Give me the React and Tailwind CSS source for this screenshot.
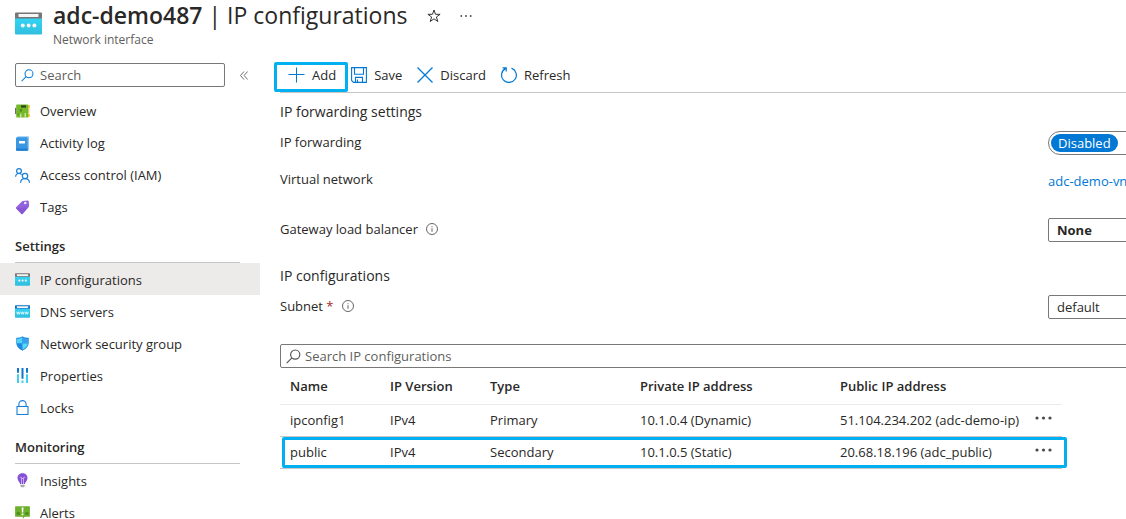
import React from "react";

function NicIcon({ className, dns }) {
  return (
    <svg viewBox="0 0 27 23" className={className} aria-hidden="true">
      <defs>
        <linearGradient id="nic-body" x1="0" y1="0" x2="0" y2="1">
          <stop offset="0" stopColor="#32d4f5" />
          <stop offset="1" stopColor="#32bedd" />
        </linearGradient>
      </defs>
      <path d="M0 6h27v15.600a1 1 0 0 1-1 1H1a1 1 0 0 1-1-1z" fill="url(#nic-body)" />
      <path d="M1 .4h25a1 1 0 0 1 1 1V6.400H0v-5a1 1 0 0 1 1-1z" fill={dns ? "#0f72c9" : "#767676"} />
      <rect x="3.500" y="2" width="20" height="3" rx=".4" fill="#f6f6f6" />
      {dns ? (
        <path
          d="M3 12l1.500 4.500L6 12l1.500 4.500L9 12m1.500 0l1.500 4.500 1.500-4.500 1.500 4.500 1.500-4.500m1.500 0l1.500 4.500 1.500-4.500 1.500 4.500L24 12"
          fill="none"
          stroke="#f2fdff"
          strokeWidth="1.400"
        />
      ) : (
        <g fill="#f6f3f4">
          <circle cx="7.800" cy="13.500" r="2" />
          <circle cx="13.600" cy="13.500" r="2" />
          <circle cx="19.400" cy="13.500" r="2" />
        </g>
      )}
    </svg>
  );
}

function SearchIcon({ className }) {
  return (
    <svg viewBox="0 0 14 14" className={className} fill="none" stroke="currentColor" strokeWidth="1.100" aria-hidden="true">
      <circle cx="8.600" cy="5.200" r="4.300" />
      <path d="M5.500 8.300L.6 13.200" />
    </svg>
  );
}

function InfoIcon() {
  return (
    <svg viewBox="0 0 12 12" className="size-3 text-[#555]" fill="none" stroke="currentColor" aria-hidden="true">
      <circle cx="6" cy="6" r="5.500" strokeWidth=".9" />
      <path d="M6 5.200v3.600M6 3.200v1" strokeWidth=".9" />
    </svg>
  );
}

const icons = {
  overview: (
    <svg viewBox="0 0 15 15" className="size-[15px]" aria-hidden="true">
      <path d="M0 4l1.500-.4v7L0 9.800z" fill="#6b6b6b" />
      <path d="M13 1h1a.8.800 0 0 1 .8.800v2.600H13zM13 10h1.800v2.400a.8.800 0 0 1-.8.800h-1z" fill="#f5c32c" />
      <path d="M13 4.800h1.500v4.800H13z" fill="#e8d27a" />
      <rect x="1.200" y=".6" width="12" height="13" rx=".8" fill="#76b82a" />
      <rect x="6" y="1.300" width="5" height="2.300" fill="#2d4a16" />
      <rect x="4.800" y="5.200" width="2.200" height="2.400" fill="#4f8520" />
      <path d="M5.200 13.600V9.800h1.200v3.800zM9.600 13.600V9h1.200v4.600z" fill="#d8efb8" />
      <path d="M2.500 9.500h1.600v1.600H2.500z" fill="#5e9624" />
    </svg>
  ),
  activity: (
    <svg viewBox="0 0 15 15" className="size-[15px]" aria-hidden="true">
      <path d="M2.500.2h10.700a.8.800 0 0 1 .8.800v12.600a1 1 0 0 1-1 1H2.500z" fill="#8fcaf3" />
      <path d="M2 1.200h9.900a.8.800 0 0 1 .8.800v12.800H2.500A1.400 1.400 0 0 1 1 13.400V2.200a1 1 0 0 1 1-1z" fill="#3a97e2" />
      <path d="M1 12.600h11.700v2.200H2.200A1.200 1.200 0 0 1 1 13.600z" fill="#1f7fd2" />
      <rect x="4" y="5" width="6" height="2.400" rx=".3" fill="#fff" />
    </svg>
  ),
  access: (
    <svg viewBox="0 0 15 15" className="size-[15px]" fill="none" stroke="#1a7fd6" strokeWidth="1.200" aria-hidden="true">
      <circle cx="4" cy="3" r="2.400" />
      <path d="M.6 8.800c.1-2 1.600-3.300 3.400-3.300 1.100 0 2 .4 2.600 1.100" />
      <circle cx="10" cy="8" r="2.700" />
      <path d="M5.600 14.700c.1-2.400 1.900-4 4.400-4s4.300 1.600 4.500 4" />
    </svg>
  ),
  tags: (
    <svg viewBox="0 0 15 15" className="size-[15px]" aria-hidden="true">
      <path d="M8 .9l4.800-.5a.9.900 0 0 1 .9.800l.4 4.800a1 1 0 0 1-.3.800l-6.100 7.100a.9.900 0 0 1-1.300 0L1.100 8.500a.8.800 0 0 1 0-1.200L7.200 1.300A1.300 1.300 0 0 1 8 .9z" fill="#9262dc" />
      <path d="M1.100 8.300l5.200 5.500a.9.900 0 0 0 1.300 0l6-6.800z" fill="#7f4bcb" opacity=".5" />
      <circle cx="10.300" cy="3" r="1.300" fill="#f1e8fb" />
    </svg>
  ),
  ipconfig: <NicIcon className="h-[13px] w-[15px]" />,
  dns: <NicIcon className="h-[13px] w-[15px]" dns />,
  nsg: (
    <svg viewBox="0 0 15 15" className="size-[15px]" aria-hidden="true">
      <path d="M7.500.2c2 1.600 3.900 1.500 6.200 1.600v5c0 4.300-3.500 6.400-6.200 8-2.700-1.600-6.200-3.700-6.200-8v-5C3.600 1.700 5.500 1.800 7.500.2z" fill="#1a86d9" />
      <path d="M7.500 1.200v6.400H2V2.700c2-.1 3.700-.1 5.500-1.500z" fill="#50d5fa" />
      <path d="M7.500 1.200v6.400H13V2.700c-2-.1-3.700-.1-5.500-1.500z" fill="#3aa0ee" />
      <path d="M2 7.500h5.500v6.300C5 12.300 2.300 10.500 2 7.500z" fill="#1f8ae0" />
      <path d="M13 7.500H7.500v6.300c2.500-1.500 5.200-3.300 5.500-6.300z" fill="#58d8fb" />
    </svg>
  ),
  properties: (
    <svg viewBox="0 0 15 15" className="size-[15px]" aria-hidden="true">
      <path d="M2 0h2v4.800H2zM6.500 0h2v10.800h-2zM11 0h2v4.800h-2z" fill="#0f76cc" />
      <path d="M2 6.200h2V15H2zM6.500 12.400h2V15h-2zM11 6.200h2V15h-2z" fill="#3fd0ee" />
    </svg>
  ),
  locks: (
    <svg viewBox="0 0 15 15" className="size-[15px]" fill="none" stroke="#1a7fd6" strokeWidth="1.100" aria-hidden="true">
      <rect x="2" y="6.500" width="11" height="8" />
      <path d="M3.900 6.500V4.200a3.600 3.600 0 0 1 7.200 0v2.300" />
    </svg>
  ),
  insights: (
    <svg viewBox="0 0 15 15" className="size-[15px]" aria-hidden="true">
      <path d="M7.500.3c2.800 0 5 2 5 4.700 0 2.900-2.200 3.600-2.600 6.100H5.100C4.700 8.600 2.500 7.900 2.500 5c0-2.700 2.200-4.700 5-4.700z" fill="#8650d6" />
      <path d="M6.500 11V5.500M8.500 11V5.500M4.900 4.700a.9.900 0 1 1 1.600.8h2a.9.900 0 1 1 1.600-.8" fill="none" stroke="#d9c4f6" strokeWidth=".8" />
      <path d="M5.300 11.700h4.400v1.400l-1 1.200H6.300l-1-1.200z" fill="#a9a9a9" />
    </svg>
  ),
  alerts: (
    <svg viewBox="0 0 15 15" className="size-[15px]" aria-hidden="true">
      <path d="M.6 1.200h13.800a.5.500 0 0 1 .5.500v9.600a.5.500 0 0 1-.5.500H9.600l-1.700 1.900-.1-1.900H.6a.5.500 0 0 1-.5-.5V1.700a.5.500 0 0 1 .5-.5z" fill="#6cb02c" />
      <path d="M1.700 7.200h3.200v2.600H1.700zM10.200 7.200h3.200v2.600h-3.200z" fill="#4b8a1b" />
      <path d="M6.600 2.400h1.900l-.3 5H6.900zM6.700 8.500h1.700v1.700H6.700z" fill="#fff" />
    </svg>
  ),
};

function NavItem({ icon, label, selected }) {
  return (
    <li>
      <a
        href="#"
        aria-current={selected ? "page" : undefined}
        className={`flex h-8 items-center gap-[10px] pl-[15px] ${selected ? "bg-[#edebe9]" : ""}`}
      >
        {icons[icon]}
        <span>{label}</span>
      </a>
    </li>
  );
}

function NavGroup({ title, children }) {
  return (
    <section className="pb-px">
      <h2 className="mt-[7px] mr-5 ml-[15px] flex h-[33px] items-center border-b border-[#c8c6c4] font-semibold">
        {title}
      </h2>
      <ul className="[&_span]:pt-0.5">{children}</ul>
    </section>
  );
}

function ToolButton({ icon, children, highlighted }) {
  return (
    <button type="button" className="relative flex h-8 items-center gap-[7px]">
      {icon}
      <span>{children}</span>
      {highlighted && (
        <span className="absolute top-[3px] -right-3 -bottom-px -left-3.5 rounded-[2px] border-3 border-[#00b0f0]" />
      )}
    </button>
  );
}

function SettingRow({ id, label, required, info, className, children }) {
  return (
    <div className={`flex h-6 shrink-0 ${className}`}>
      <div className="flex h-[22px] w-[768px] shrink-0 items-center">
        <label htmlFor={id}>
          {label}
          {required && <span className="text-[#a4262c]"> *</span>}
        </label>
        {info && (
          <span className="ml-2">
            <InfoIcon />
          </span>
        )}
      </div>
      {children}
    </div>
  );
}

function MoreButton() {
  return (
    <button type="button" aria-label="More actions" className="flex h-5 w-5 items-center pb-1">
      <svg viewBox="0 0 17 4" className="h-1 w-[17px]" fill="#4a4a4a" aria-hidden="true">
        <circle cx="2" cy="2" r="1.600" />
        <circle cx="8.500" cy="2" r="1.600" />
        <circle cx="15" cy="2" r="1.600" />
      </svg>
    </button>
  );
}

const rows = [
  { name: "ipconfig1", version: "IPv4", type: "Primary", priv: "10.1.0.4 (Dynamic)", pub: "51.104.234.202 (adc-demo-ip)" },
  { name: "public", version: "IPv4", type: "Secondary", priv: "10.1.0.5 (Static)", pub: "20.68.18.196 (adc_public)", highlighted: true },
];

export default function App() {
  return (
    <div className="flex h-screen flex-col overflow-hidden bg-white font-['Open_Sans','Noto_Sans',sans-serif] text-[13px] leading-5 text-[#292827]">
      <header className="flex h-[59px] shrink-0 items-start pl-[15px]">
        <NicIcon className="mt-3 h-[23px] w-[27px]" />
        <div className="ml-[11px]">
          <h1 className="h-8 text-[23px] leading-[30px] whitespace-nowrap">
            <span className="font-semibold">adc-demo487</span> | IP configurations
          </h1>
          <p className="text-[12px] leading-4 text-[#605e5c]">Network interface</p>
        </div>
        <button type="button" aria-label="Add to favorites" className="mt-[9px] ml-[19px]">
          <svg viewBox="0 0 14 14" className="size-3.5" fill="none" stroke="#333" strokeWidth="1" aria-hidden="true">
            <path d="M7 1l1.500 4.300h4.600L9.400 8l1.400 4.500L7 9.800l-3.800 2.700L4.600 8 .9 5.300h4.600z" />
          </svg>
        </button>
        <button type="button" aria-label="More" className="mt-[14px] ml-[19px]">
          <svg viewBox="0 0 12 4" className="h-1 w-3" fill="#444" aria-hidden="true">
            <circle cx="1.300" cy="2" r=".9" />
            <circle cx="6" cy="2" r=".9" />
            <circle cx="10.700" cy="2" r=".9" />
          </svg>
        </button>
      </header>

      <div className="flex min-h-0 flex-1">
        <nav className="w-[260px] shrink-0">
          <div className="mt-1 mb-2 ml-[15px] flex items-center">
            <label className="flex h-6 w-[210px] items-center gap-[6px] rounded-[2px] border border-[#7a7876] pl-[5px]">
              <SearchIcon className="size-[13px] shrink-0 text-[#0078d4]" />
              <input
                type="search"
                aria-label="Search menu"
                placeholder="Search"
                className="w-full min-w-0 bg-transparent outline-none placeholder:text-[#605e5c]"
              />
            </label>
            <button type="button" aria-label="Collapse menu" className="ml-[15px]">
              <svg viewBox="0 0 8 9" className="h-[9px] w-2" fill="none" stroke="#605e5c" strokeWidth=".9" aria-hidden="true">
                <path d="M4 .5l-3.500 4L4 8.500M7.600.5l-3.500 4 3.500 4" />
              </svg>
            </button>
          </div>
          <ul>
            <NavItem icon="overview" label="Overview" />
            <NavItem icon="activity" label="Activity log" />
            <NavItem icon="access" label="Access control (IAM)" />
            <NavItem icon="tags" label="Tags" />
          </ul>
          <NavGroup title="Settings">
            <NavItem icon="ipconfig" label="IP configurations" selected />
            <NavItem icon="dns" label="DNS servers" />
            <NavItem icon="nsg" label="Network security group" />
            <NavItem icon="properties" label="Properties" />
            <NavItem icon="locks" label="Locks" />
          </NavGroup>
          <NavGroup title="Monitoring">
            <NavItem icon="insights" label="Insights" />
            <NavItem icon="alerts" label="Alerts" />
          </NavGroup>
        </nav>

        <main className="flex min-w-0 flex-1 flex-col overflow-hidden">
          <div className="ml-5 flex h-[34px] shrink-0 items-start gap-[15px] border-b border-[#c8c6c4] pl-2">
            <ToolButton
              highlighted
              icon={
                <svg viewBox="0 0 17 16" className="h-4 w-[17px]" fill="none" stroke="#0078d4" strokeWidth="1" aria-hidden="true">
                  <path d="M8.500.5v15M.5 7.500h16" />
                </svg>
              }
            >
              Add
            </ToolButton>
            <ToolButton
              icon={
                <svg viewBox="0 0 16 16" className="size-4" fill="none" stroke="#0078d4" strokeWidth="1.100" aria-hidden="true">
                  <path d="M.6.6h14.800v14.800H2.500L.6 13.500zM3.500.6v6.600h9V.6M4.500 15.400v-5h7v5M6.500 12.400v3" />
                </svg>
              }
            >
              Save
            </ToolButton>
            <ToolButton
              icon={
                <svg viewBox="0 0 16 16" className="size-4" fill="none" stroke="#0078d4" strokeWidth="1.300" aria-hidden="true">
                  <path d="M.5.5l15 15M15.500.5l-15 15" />
                </svg>
              }
            >
              Discard
            </ToolButton>
            <ToolButton
              icon={
                <svg viewBox="0 0 16 16" className="size-4" fill="none" stroke="#0078d4" strokeWidth="1.200" aria-hidden="true">
                  <path d="M10.500 1.100A7.400 7.400 0 1 1 4.700 1.400M1.500.8h3.700v3.700" />
                </svg>
              }
            >
              Refresh
            </ToolButton>
          </div>

          <div className="flex flex-col pl-5">
            <h2 className="mt-[9px] text-[14px] leading-5">IP forwarding settings</h2>
            <SettingRow id="forwarding" label="IP forwarding" className="mt-[9px]">
              <div className="flex w-[320px] shrink-0 items-center rounded-full border border-[#7a7876] px-0.5">
                <button id="forwarding" type="button" aria-pressed="true" className="flex h-[18px] items-center rounded-full bg-[#0078d4] px-[7px] text-white">
                  Disabled
                </button>
              </div>
            </SettingRow>
            <SettingRow label="Virtual network" className="mt-[13px]">
              <a href="#" className="pt-[3px] whitespace-nowrap text-[#0078d4]">adc-demo-vn</a>
            </SettingRow>
            <SettingRow id="gateway" label="Gateway load balancer" info className="mt-[26px]">
              <select id="gateway" className="w-[320px] shrink-0 appearance-none rounded-[2px] border border-[#7a7876] px-2 font-bold">
                <option>None</option>
              </select>
            </SettingRow>

            <h2 className="mt-6 text-[14px] leading-5">IP configurations</h2>
            <SettingRow id="subnet" label="Subnet" required info className="mt-[9px]">
              <select id="subnet" className="w-[320px] shrink-0 appearance-none rounded-[2px] border border-[#7a7876] px-2">
                <option>default</option>
              </select>
            </SettingRow>

            <label className="mt-[25px] -mr-1 flex h-6 items-center gap-1 rounded-[2px] border border-[#7a7876] pl-[5px]">
              <SearchIcon className="size-[15px] shrink-0 text-[#555]" />
              <input
                type="search"
                aria-label="Search IP configurations"
                placeholder="Search IP configurations"
                className="w-full min-w-0 bg-transparent outline-none placeholder:text-[#605e5c]"
              />
            </label>

            <table className="w-[782px] table-fixed border-collapse text-left">
              <colgroup>
                <col className="w-[110px]" />
                <col className="w-[100px]" />
                <col className="w-[150px]" />
                <col className="w-[200px]" />
                <col className="w-[195px]" />
                <col className="w-[27px]" />
              </colgroup>
              <thead>
                <tr className="h-9 border-b border-[#edebe9] whitespace-nowrap [&>th]:p-0 [&>th]:font-semibold">
                  <th><span className="pl-[10px]">Name</span></th>
                  <th>IP Version</th>
                  <th>Type</th>
                  <th>Private IP address</th>
                  <th>Public IP address</th>
                  <th aria-label="Actions" />
                </tr>
              </thead>
              <tbody>
                {rows.map((r) => (
                  <tr key={r.name} className="relative h-8 border-b border-[#c8c6c4] whitespace-nowrap [&>td]:p-0">
                    <td>
                      <span className="pl-[10px]">{r.name}</span>
                      {r.highlighted && (
                        <span className="pointer-events-none absolute top-px -right-[5px] -bottom-px left-0.5 rounded-[2px] border-3 border-[#00b0f0]" />
                      )}
                    </td>
                    <td>{r.version}</td>
                    <td>{r.type}</td>
                    <td>{r.priv}</td>
                    <td>{r.pub}</td>
                    <td><MoreButton /></td>
                  </tr>
                ))}
              </tbody>
            </table>
          </div>
        </main>
      </div>
    </div>
  );
}
